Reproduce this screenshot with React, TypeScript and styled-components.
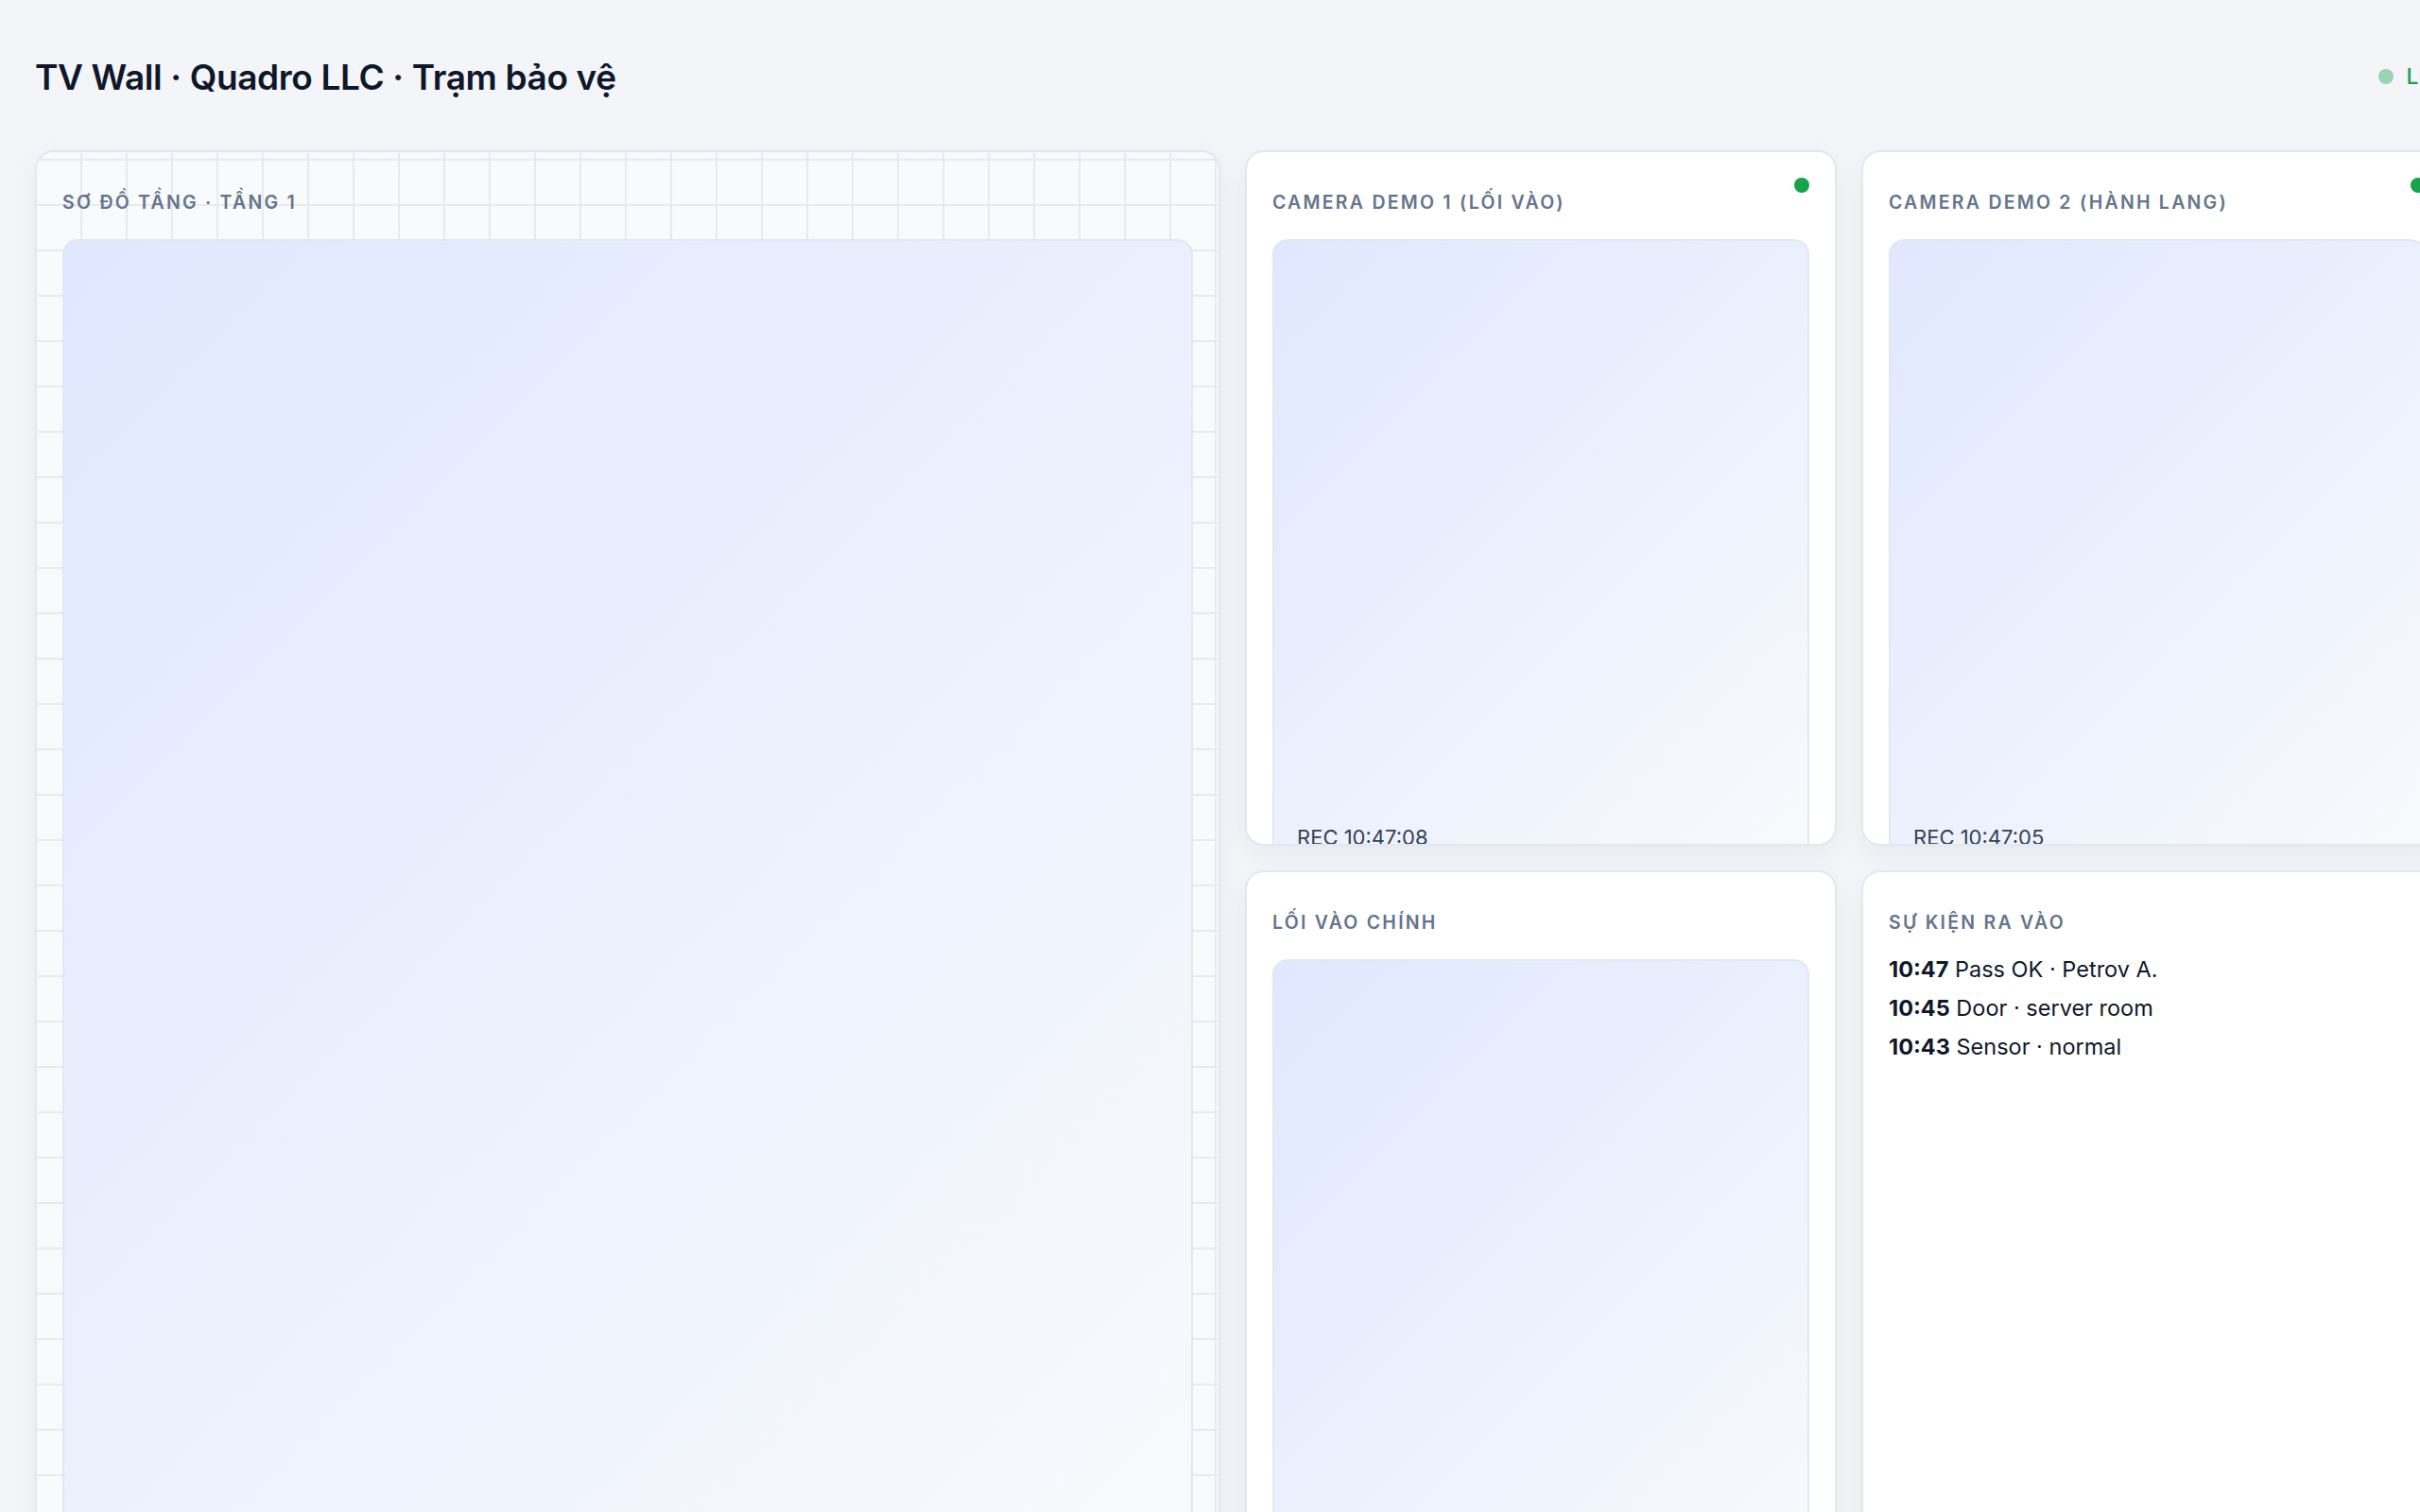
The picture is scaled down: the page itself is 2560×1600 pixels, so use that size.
import React from 'react';
import styled, { createGlobalStyle } from 'styled-components';

const GlobalStyle = createGlobalStyle`
  body {
    margin: 0;
    padding: 0;
    background: #f3f5f9;
    font-family: Inter, "Noto Sans", sans-serif;
    color: #0f172a;
    overflow: hidden;
  }
`;

const Page = styled.div`
  padding: 38px 37px;
`;

const Wall = styled.div`
  display: grid;
  width: max-content;
`;

const Header = styled.header`
  display: flex;
  align-items: center;
  justify-content: space-between;
  height: 86px;
  margin-bottom: 35px;
`;

const Title = styled.h1`
  margin: 0;
  font-size: 37px;
  font-weight: 600;
  letter-spacing: -0.01em;
`;

const Status = styled.div`
  display: flex;
  align-items: center;
  gap: 14px;
  font-size: 23px;
  font-weight: 500;
  color: #16a34a;
`;

const Pulse = styled.span`
  width: 16px;
  height: 16px;
  border-radius: 50%;
  background: #16a34a;
  opacity: 0.4;
`;

const Grid = styled.div`
  display: grid;
  grid-template-columns: 1254px 626px 626px;
  grid-template-rows: 736px 736px;
  gap: 26px;
`;

const Card = styled.section<{ plan?: boolean }>`
  position: relative;
  grid-row: ${({ plan }) => (plan ? 'span 2' : 'auto')};
  display: flex;
  flex-direction: column;
  padding: 41px 27px 27px;
  border: 2px solid #e2e8f0;
  border-radius: 20px;
  overflow: hidden;
  box-shadow: 0 10px 30px rgba(15, 23, 42, 0.05);
  background-color: ${({ plan }) => (plan ? '#f8fafc' : '#ffffff')};
  background-image: ${({ plan }) =>
    plan
      ? `linear-gradient(to right, #e6ebf2 2px, transparent 2px),
         linear-gradient(to bottom, #e6ebf2 2px, transparent 2px)`
      : 'none'};
  background-size: 48px 48px;
  background-position: 46px 7px;
`;

const Label = styled.h2<{ gap?: number }>`
  margin: 0 0 ${({ gap }) => gap ?? 27}px;
  font-size: 19.5px;
  line-height: 24px;
  font-weight: 600;
  letter-spacing: 0.115em;
  text-transform: uppercase;
  color: #64748b;
`;

const Online = styled.span`
  position: absolute;
  top: 27px;
  right: 27px;
  width: 16px;
  height: 16px;
  border-radius: 50%;
  background: #16a34a;
`;

const Screen = styled.div<{ tall?: boolean }>`
  position: relative;
  flex-shrink: 0;
  height: ${({ tall }) => (tall ? '1400px' : '670px')};
  border: 2px solid #e2e8f0;
  border-radius: 16px;
  background: linear-gradient(135deg, #e0e7ff 0%, #f8fafc 100%);
`;

const Rec = styled.span`
  position: absolute;
  left: 24px;
  bottom: 26px;
  font-size: 22px;
  line-height: 26px;
  color: #334155;
`;

const Feed = styled.ul`
  list-style: none;
  margin: 0;
  padding: 0;
`;

const Event = styled.li`
  font-size: 23.5px;
  line-height: 41px;
  color: #0f172a;

  b {
    font-weight: 700;
  }
`;

const events = [
  { time: '10:47', text: 'Pass OK · Petrov A.' },
  { time: '10:45', text: 'Door · server room' },
  { time: '10:43', text: 'Sensor · normal' },
];

const App: React.FC = () => (
  <>
    <GlobalStyle />
    <Page>
      <Wall>
        <Header>
          <Title>TV Wall · Quadro LLC · Trạm bảo vệ</Title>
          <Status>
            <Pulse />
            LIVE
          </Status>
        </Header>
        <Grid>
          <Card plan>
            <Label>Sơ đồ tầng · Tầng 1</Label>
            <Screen tall />
          </Card>
          <Card>
            <Online />
            <Label>Camera demo 1 (lối vào)</Label>
            <Screen>
              <Rec>REC 10:47:08</Rec>
            </Screen>
          </Card>
          <Card>
            <Online />
            <Label>Camera demo 2 (hành lang)</Label>
            <Screen>
              <Rec>REC 10:47:05</Rec>
            </Screen>
          </Card>
          <Card>
            <Label>Lối vào chính</Label>
            <Screen />
          </Card>
          <Card>
            <Label gap={17}>Sự kiện ra vào</Label>
            <Feed>
              {events.map((e) => (
                <Event key={e.time}>
                  <b>{e.time}</b> {e.text}
                </Event>
              ))}
            </Feed>
          </Card>
        </Grid>
      </Wall>
    </Page>
  </>
);

export default App;
